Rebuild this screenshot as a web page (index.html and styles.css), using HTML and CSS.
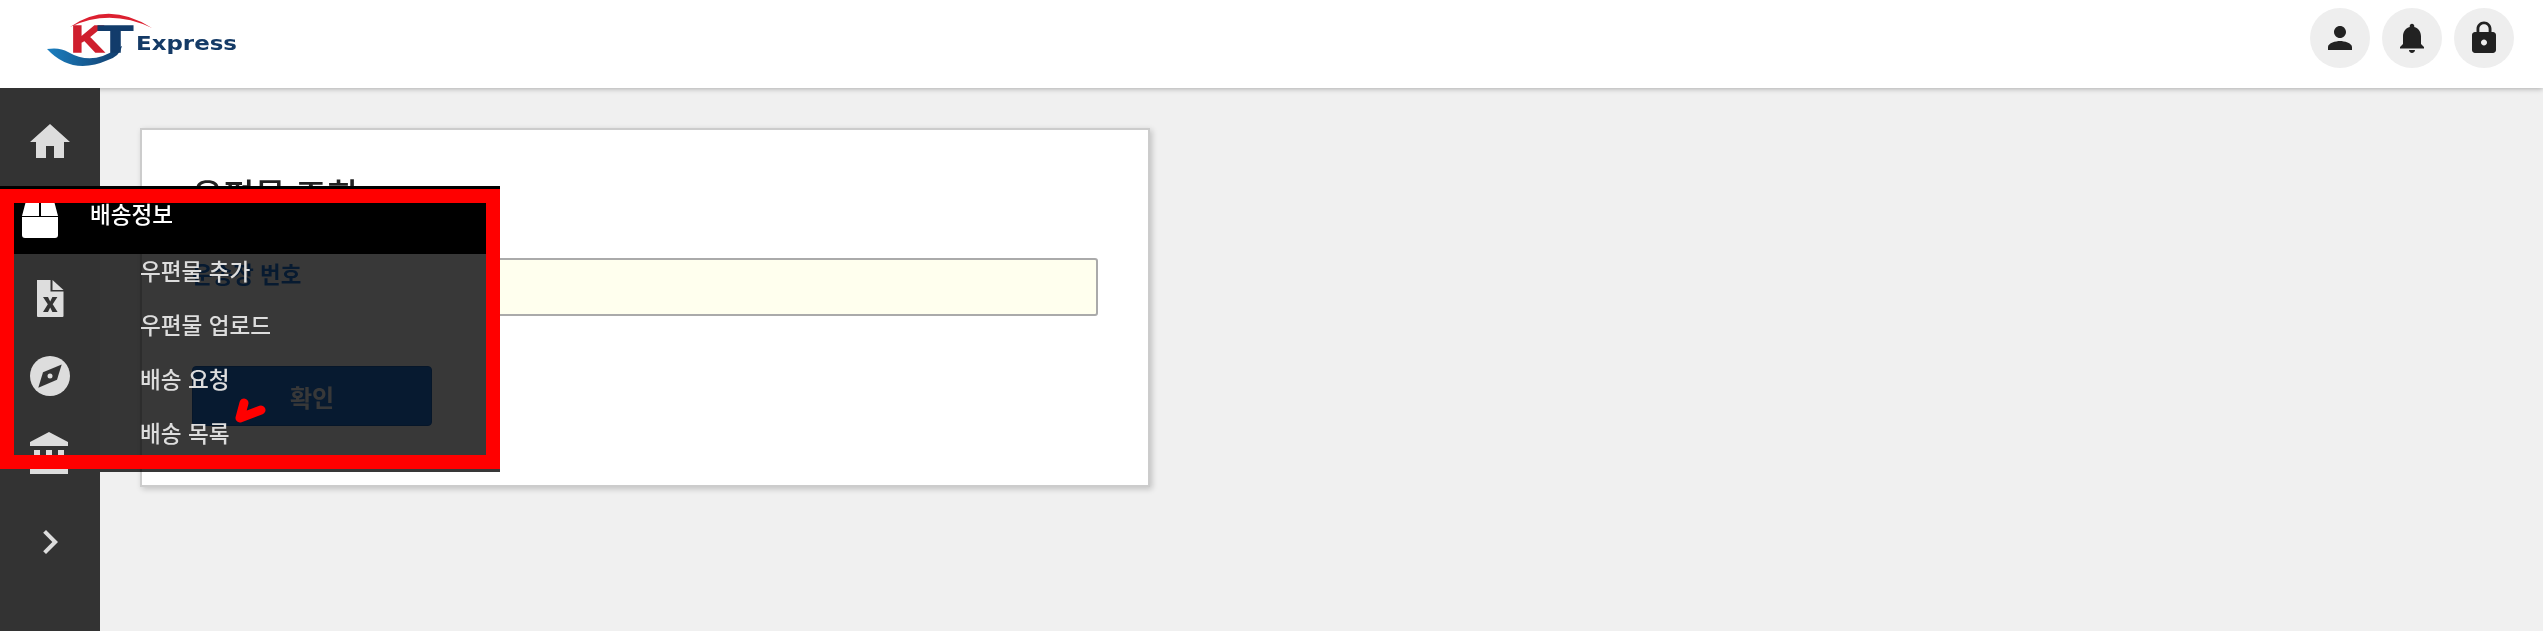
FILE: index.html
```html
<!DOCTYPE html>
<html lang="ko">
<head>
<meta charset="utf-8">
<title>KT Express</title>
<link rel="stylesheet" href="styles.css">
</head>
<body>
<header class="topbar">
  <svg class="logo" viewBox="0 0 220 88" width="220" height="88" aria-label="KT Express">
    <defs>
      <linearGradient id="red" x1="0" y1="0" x2="1" y2="1"><stop offset="0" stop-color="#e8202e"/><stop offset="1" stop-color="#a81b2c"/></linearGradient>
      <linearGradient id="blue" x1="0" y1="0" x2="1" y2="0"><stop offset="0" stop-color="#1b7fc0"/><stop offset="1" stop-color="#123c6b"/></linearGradient>
    </defs>
    <path d="M40 27Q78 0 122 28Q80 8 40 27Z" fill="#dc2030"/>
    <path d="M17 49Q30 47 38 52Q62 66 86 49L92 46Q90 56 78 60Q42 76 17 49Z" fill="url(#blue)"/>
    <text class="logo-k" x="41" y="51.500" textLength="33" lengthAdjust="spacingAndGlyphs">K</text>
    <text class="logo-t" x="68" y="51.500" textLength="35" lengthAdjust="spacingAndGlyphs">T</text>
    <text class="logo-x" x="106" y="50" textLength="101" lengthAdjust="spacingAndGlyphs">Express</text>
  </svg>
  <div class="actions">
    <button class="round"><svg viewBox="0 0 24 24" class="ico36"><path d="M12 12c2.21 0 4-1.79 4-4s-1.79-4-4-4-4 1.79-4 4 1.79 4 4 4zm0 2c-2.67 0-8 1.34-8 4v2h16v-2c0-2.66-5.33-4-8-4z"/></svg></button>
    <button class="round"><svg viewBox="0 0 24 24" class="ico36"><path d="M12 22c1.1 0 2-.9 2-2h-4c0 1.1.89 2 2 2zm6-6v-5c0-3.07-1.64-5.64-4.5-6.32V4c0-.83-.67-1.5-1.5-1.5s-1.5.67-1.5 1.5v.68C7.63 5.36 6 7.92 6 11v5l-2 2v1h16v-1l-2-2z"/></svg></button>
    <button class="round"><svg viewBox="0 0 24 24" class="ico36"><path d="M18 8h-1V6c0-2.76-2.24-5-5-5S7 3.24 7 6v2H6c-1.1 0-2 .9-2 2v10c0 1.1.9 2 2 2h12c1.1 0 2-.9 2-2V10c0-1.1-.9-2-2-2zm-6 9c-1.1 0-2-.9-2-2s.9-2 2-2 2 .9 2 2-.9 2-2 2zm3.1-9H8.9V6c0-1.71 1.39-3.1 3.1-3.1 1.71 0 3.1 1.39 3.1 3.1v2z"/></svg></button>
  </div>
</header>

<div class="layout">
  <nav class="sidebar">
    <svg viewBox="0 0 24 24" class="nav-ico"><path d="M10 20v-6h4v6h5v-8h3L12 3 2 12h3v8z"/></svg>
    <svg viewBox="0 0 48 48" class="nav-ico"><rect x="6" y="16" width="36" height="26" rx="3"/></svg>
    <svg viewBox="0 0 48 48" class="nav-ico">
      <path d="M11 6H24.5V17.5H37.5V42a1 1 0 0 1-1 1H12a1 1 0 0 1-1-1Z"/>
      <path d="M26.5 6L37.5 16H26.5Z"/>
      <path class="cut-fill" d="M17 23h5l2.200 4.500 2.200-4.500h5l-4.700 7.300 4.900 7.700h-5.200l-2.200-4.600-2.200 4.600h-5l4.800-7.700Z"/>
    </svg>
    <svg viewBox="0 0 48 48" class="nav-ico">
      <circle cx="24" cy="24" r="20"/>
      <path class="cut-fill" d="M35.7 12.500L31 27.800L12.300 35.700L17 20.200Z"/>
      <circle cx="24" cy="24" r="2.500"/>
    </svg>
    <svg viewBox="0 0 24 24" class="nav-ico"><path d="M4 10v7h3v-7H4zm6 0v7h3v-7h-3zM2 22h19v-3H2v3zm14-12v7h3v-7h-3zm-4.500-9L2 6v2h19V6l-9.500-5z"/></svg>
    <svg viewBox="0 0 24 24" class="nav-ico nav-last"><path d="M10 6L8.590 7.410 13.170 12l-4.580 4.590L10 18l6-6z"/></svg>
  </nav>

  <main class="content">
    <section class="card">
      <h1 class="title">우편물 조회</h1>
      <div class="field">
        <label class="field-label">운송장 번호</label>
        <div class="field-input"></div>
      </div>
      <button class="submit">확인</button>
    </section>
  </main>
</div>

<div class="dim"></div>

<aside class="menu">
  <div class="menu-head">
    <svg viewBox="0 0 36 40" class="box-ico">
      <path d="M4.500 0H17V17H0Z"/>
      <path d="M19 0H31.500L36 17H19Z"/>
      <path d="M0 18H36V36a3 3 0 0 1-3 3H3a3 3 0 0 1-3-3Z"/>
    </svg>
    <span class="menu-name">배송정보</span>
  </div>
  <ul class="menu-list">
    <li>우편물 추가</li>
    <li>우편물 업로드</li>
    <li>배송 요청</li>
    <li>배송 목록</li>
  </ul>
  <div class="mark-frame"></div>
  <svg class="mark-tick" viewBox="0 0 40 32" width="40" height="32"><path d="M14 7L10 22L31 14"/></svg>
</aside>
</body>
</html>
```
FILE: styles.css
```css
* { box-sizing: border-box; }
html, body { margin: 0; padding: 0; }
body {
  width: 2543px;
  height: 631px;
  overflow: hidden;
  background: #f0f0f0;
  font-family: "Noto Sans CJK KR", "Noto Sans", Roboto, sans-serif;
  position: relative;
}

.topbar {
  height: 88px;
  background: #fff;
  display: flex;
  align-items: flex-start;
  justify-content: space-between;
  padding-left: 30px;
  padding-right: 29px;
  box-shadow: 0 1px 5px rgba(0, 0, 0, .28);
  position: relative;
  z-index: 2;
}
.logo { display: block; }
.logo-k, .logo-t { font-family: "Liberation Sans", sans-serif; font-weight: 700; font-size: 37px; stroke-width: 1.500px; }
.logo-k { fill: #cf1f2e; stroke: #cf1f2e; }
.logo-t { fill: #123c6b; stroke: #123c6b; }
.logo-x { font-family: "DejaVu Sans", sans-serif; font-weight: 700; font-size: 19px; fill: #143a66; }

.actions { display: flex; gap: 12px; padding-top: 8px; }
.round {
  width: 60px;
  height: 60px;
  padding: 0;
  border: 0;
  border-radius: 50%;
  background: #eee;
  display: flex;
  align-items: center;
  justify-content: center;
}
.ico36 { width: 36px; height: 36px; fill: #222; display: block; }

.layout { display: flex; height: 543px; }

.sidebar {
  width: 100px;
  flex: none;
  background: #333;
  padding-top: 30px;
  display: flex;
  flex-direction: column;
  align-items: center;
  gap: 30px;
  position: relative;
  z-index: 4;
}
.nav-ico { width: 48px; height: 48px; fill: #ddd; display: block; flex: none; }
.nav-last { margin-top: 10px; }
.cut-fill { fill: #333; }

.content { flex: 1; padding: 40px; }

.card {
  width: 1010px;
  height: 359px;
  background: #fff;
  border: 2px solid #ccc;
  box-shadow: 2px 2px 6px rgba(0, 0, 0, .2);
  padding: 44px 50px 0;
}
.title {
  margin: 0 0 44px;
  font-size: 34px;
  line-height: 40px;
  font-weight: 500;
  color: #222;
}
.field { display: grid; grid-template-columns: 300px 1fr; }
.field-label {
  font-size: 22.400px;
  line-height: 30px;
  font-weight: 700;
  color: #2076da;
}
.field-input {
  height: 58px;
  border: 2px solid #aaa;
  border-radius: 3px;
  background: #ffffee;
}
.submit {
  display: block;
  margin-top: 50px;
  width: 240px;
  height: 60px;
  border: 1px solid #1a63bb;
  border-radius: 4px;
  background: #2076da;
  color: #fff;
  font-family: inherit;
  font-size: 24px;
  font-weight: 700;
}

.dim {
  position: absolute;
  left: 100px;
  top: 186px;
  width: 400px;
  height: 286px;
  background: #383838;
  mix-blend-mode: multiply;
  z-index: 3;
}

.menu {
  position: absolute;
  left: 0;
  top: 186px;
  width: 500px;
  height: 286px;
  z-index: 5;
  color: #ddd;
}
.menu-head {
  height: 68px;
  background: #000;
  color: #fff;
  display: flex;
  align-items: flex-start;
}
.box-ico { width: 36px; height: 40px; fill: #fff; margin: 13px 0 0 22px; flex: none; }
.menu-name { margin: 12px 0 0 32px; font-size: 22.600px; line-height: 32px; font-weight: 500; }
.menu-list {
  list-style: none;
  margin: 0;
  padding: 1px 0 0 140px;
  display: flex;
  flex-direction: column;
  gap: 22px;
  font-size: 22.600px;
  line-height: 32px;
  font-weight: 500;
}
.mark-frame {
  position: absolute;
  left: 0;
  right: 0;
  top: 3px;
  bottom: 3px;
  border: 14px solid #f00;
}
.mark-tick {
  position: absolute;
  left: 230px;
  top: 210px;
}
.mark-tick path {
  fill: none;
  stroke: #f00;
  stroke-width: 9;
  stroke-linecap: round;
  stroke-linejoin: round;
}
```
